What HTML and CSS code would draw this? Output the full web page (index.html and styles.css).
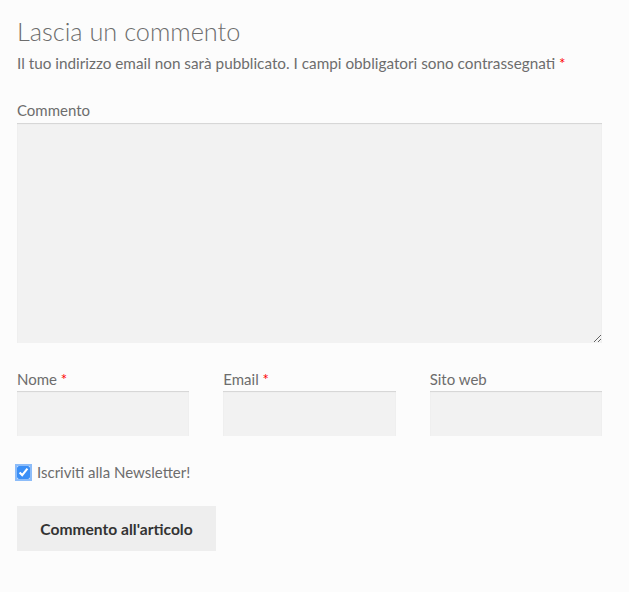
FILE: index.html
```html
<!DOCTYPE html>
<html lang="it">
<head>
    <meta charset="UTF-8">
    <meta name="viewport" content="width=device-width, initial-scale=1.0">
    <title>Lascia un commento</title>
    <link rel="stylesheet" href="styles.css">
</head>
<body>
    <div class="comment-respond">
        <h3 class="reply-title">Lascia un commento</h3>
        <form class="comment-form">
            <p class="comment-notes">Il tuo indirizzo email non sarà pubblicato. I campi obbligatori sono contrassegnati <span class="required">*</span></p>

            <div class="field">
                <label for="comment">Commento</label>
                <textarea id="comment" name="comment"></textarea>
            </div>

            <div class="field-row">
                <div class="field">
                    <label for="author">Nome <span class="required">*</span></label>
                    <input type="text" id="author" name="author">
                </div>
                <div class="field">
                    <label for="email">Email <span class="required">*</span></label>
                    <input type="email" id="email" name="email">
                </div>
                <div class="field">
                    <label for="url">Sito web</label>
                    <input type="url" id="url" name="url">
                </div>
            </div>

            <div class="newsletter">
                <input type="checkbox" id="newsletter" checked>
                <label for="newsletter">Iscriviti alla Newsletter!</label>
            </div>

            <button type="submit" class="submit-btn">Commento all'articolo</button>
        </form>
    </div>
</body>
</html>
```

FILE: styles.css
```css
* {
    margin: 0;
    padding: 0;
    box-sizing: border-box;
}

body {
    background: #fcfcfc;
    color: #6d6d6d;
    font-family: Lato, "Open Sans", sans-serif;
    font-size: 16px;
    line-height: 24px;
}

.comment-respond {
    width: 585px;
    margin-left: 17px;
    padding-top: 14px;
}

.reply-title {
    font-size: 25.3px;
    font-weight: 300;
    line-height: 34px;
    color: #6d6d6d;
}

.comment-notes {
    margin-top: 3px;
    font-size: 15.3px;
}

.required {
    color: red;
}

.field {
    display: flex;
    flex-direction: column;
    min-width: 0;
}

.comment-form > .field {
    margin-top: 23px;
}

label {
    font-size: 15px;
    line-height: 24px;
}

textarea,
input[type="text"],
input[type="email"],
input[type="url"] {
    width: 100%;
    background: #f2f2f2;
    border: 0;
    box-shadow: inset 0 1px 1px rgba(0, 0, 0, 0.125);
    font: inherit;
    color: #43454b;
    outline: none;
}

textarea {
    height: 220px;
    margin-top: 1px;
    resize: vertical;
    padding: 10px;
}

.field-row {
    display: grid;
    grid-template-columns: repeat(3, minmax(0, 1fr));
    gap: 34px;
    margin-top: 24px;
}

.field-row input {
    height: 45px;
    padding: 0 10px;
}

.newsletter {
    display: flex;
    align-items: center;
    gap: 7px;
    margin-top: 24px;
}

.newsletter input {
    width: 13px;
    height: 13px;
    accent-color: #3b8ff6;
    border-radius: 3px;
    box-shadow: 0 0 0 2px #8cbcf9;
}

.submit-btn {
    display: block;
    margin-top: 22px;
    width: 199px;
    height: 45px;
    background: #eeeeee;
    border: 0;
    color: #333333;
    font-family: inherit;
    font-size: 15.6px;
    font-weight: bold;
    cursor: pointer;
}
```
